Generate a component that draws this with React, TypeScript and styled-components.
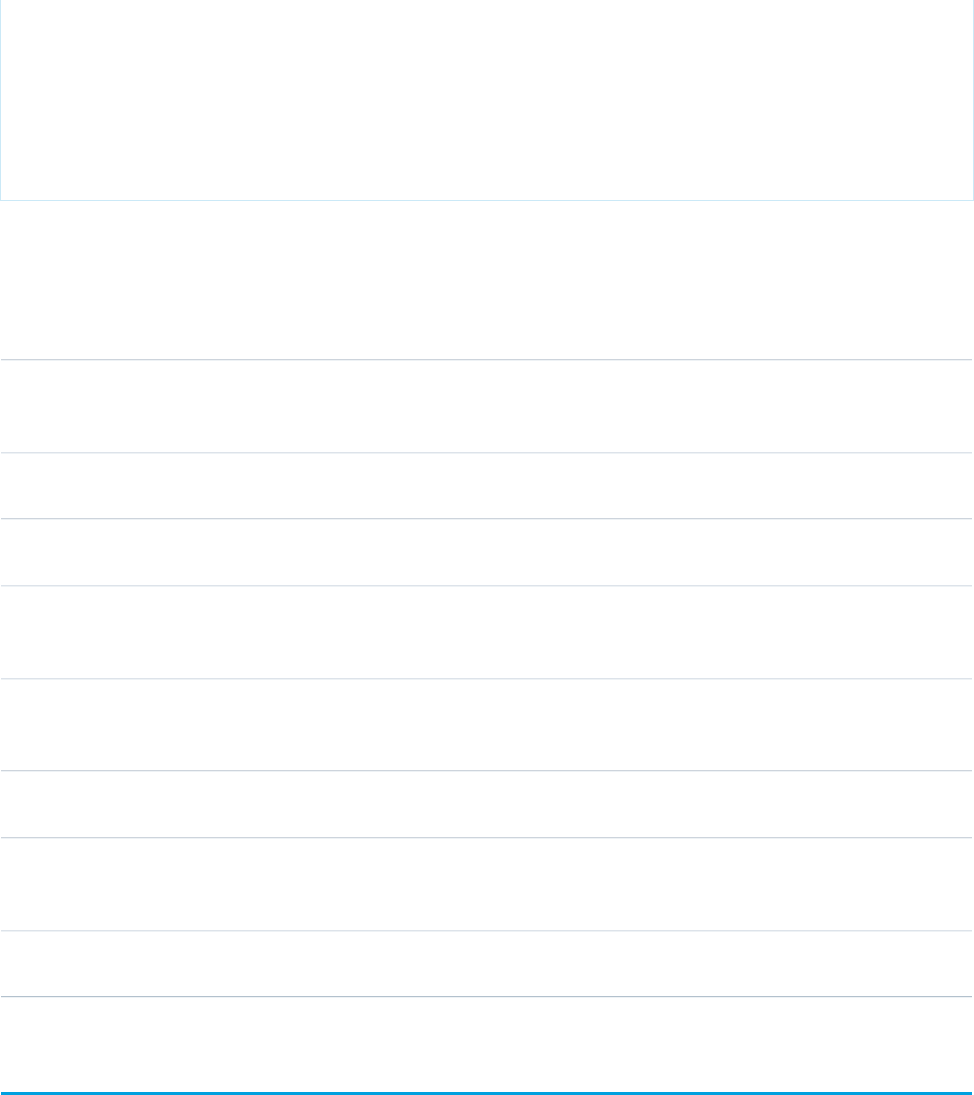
import React from "react";
import styled, { createGlobalStyle } from "styled-components";

const Global = createGlobalStyle`
  html, body { margin: 0; padding: 0; background: #ffffff; }
  body { font-family: "Liberation Sans", Arial, sans-serif; }
`;

const Page = styled.div`
  width: 974px;
  display: flex;
  flex-direction: column;
`;

const HeaderCard = styled.section`
  border: 1px solid #cbe9f7;
  border-top: none;
  box-sizing: border-box;
  height: 201px;
  background: #ffffff;
`;

const Spacer = styled.div`
  height: 158px;
`;

const List = styled.div`
  display: flex;
  flex-direction: column;
  margin: 0 2px 0 1px;
`;

const tones: Record<string, string> = {
  light: "#dde3ea",
  mid: "#cdd4dc",
  dark: "#b3c1cd",
};

const Row = styled.div<{ $h: number; $tone: string }>`
  height: ${(p) => p.$h}px;
  border-top: 1px solid ${(p) => tones[p.$tone]};
  box-shadow: inset 0 1px 0 #eef2f5;
  box-sizing: border-box;
`;

const Bar = styled.div`
  height: 3px;
  background: #00a0df;
  margin: 0 2px 0 1px;
`;

const rows: { h: number; tone: string }[] = [
  { h: 93, tone: "mid" },
  { h: 66, tone: "light" },
  { h: 67, tone: "mid" },
  { h: 93, tone: "light" },
  { h: 92, tone: "light" },
  { h: 67, tone: "mid" },
  { h: 93, tone: "mid" },
  { h: 66, tone: "light" },
  { h: 96, tone: "dark" },
];

export default function App() {
  return (
    <>
      <Global />
      <Page>
        <HeaderCard />
        <Spacer />
        <List>
          {rows.map((r, i) => (
            <Row key={i} $h={r.h} $tone={r.tone} />
          ))}
        </List>
        <Bar />
      </Page>
    </>
  );
}
